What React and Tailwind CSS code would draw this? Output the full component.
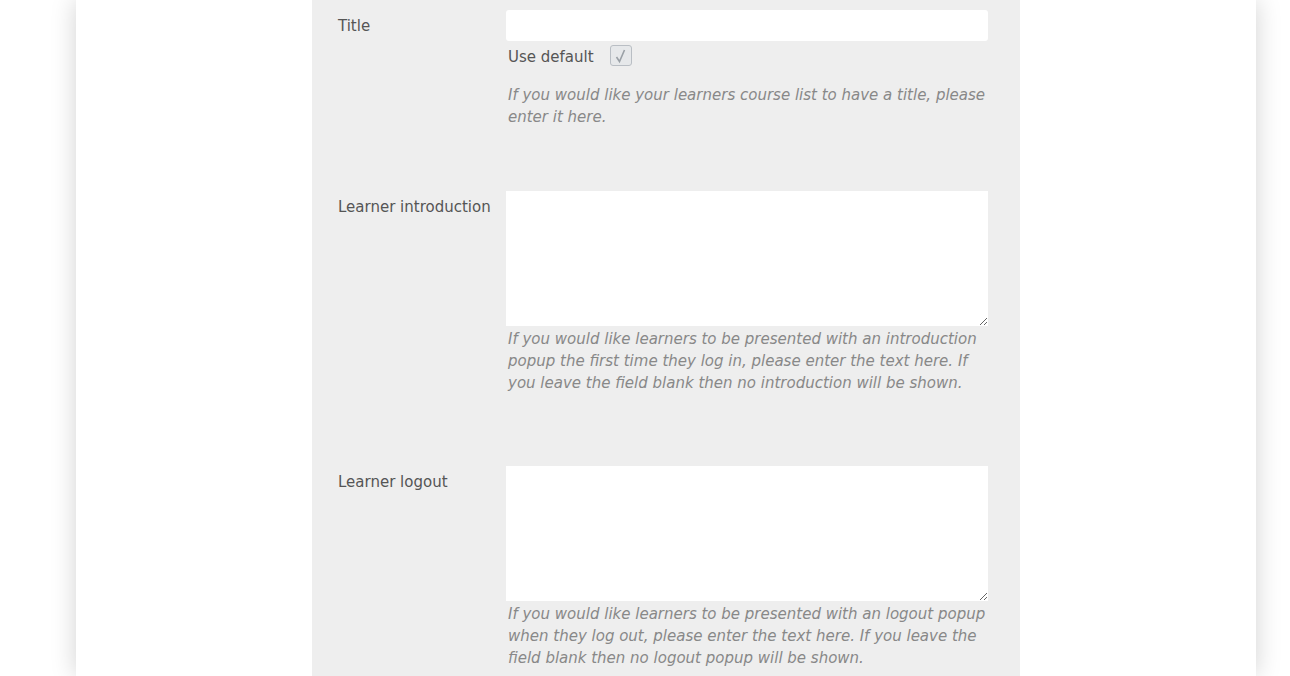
export default function App() {
  const rows = [
    {
      label: 'Learner introduction',
      help: 'If you would like learners to be presented with an introduction popup the first time they log in, please enter the text here. If you leave the field blank then no introduction will be shown.',
    },
    {
      label: 'Learner logout',
      help: 'If you would like learners to be presented with an logout popup when they log out, please enter the text here. If you leave the field blank then no logout popup will be shown.',
    },
  ];

  return (
    <div className="h-[676px] overflow-hidden bg-white font-['DejaVu_Sans',Verdana,sans-serif] text-[15px] text-[#555]">
      <div className="ml-[76px] w-[1180px] h-full bg-white shadow-[0_0_24px_rgba(0,0,0,0.18)]">
        <div className="ml-[236px] w-[708px] h-full bg-[#eeeeee]">
          {/* Title */}
          <div className="flex pt-[10px] pb-[63px]">
            <div className="w-[194px] pl-[26px] pt-[6px] leading-[20px]">Title</div>
            <div className="w-[482px]">
              <input type="text" className="block w-full h-[31px] rounded-[3px] bg-white outline-none" />
              <div className="flex items-start mt-[4px] h-[21px]">
                <span className="pl-[2px] pt-[2px] leading-[20px]">Use default</span>
                <span className="ml-[16px] w-[22px] h-[21px] rounded-[3px] border border-[#b9bec4] bg-[#e6e8ea] flex items-center justify-center">
                  <svg width="16" height="16" viewBox="0 0 16 16" fill="none">
                    <path d="M3.5 9 L6.5 13.5 L11.5 2" stroke="#9aa0a6" strokeWidth="1.6" />
                  </svg>
                </span>
              </div>
              <p className="mt-[18px] pl-[2px] italic text-[#888] leading-[22px]">
                If you would like your learners course list to have a title, please enter it here.
              </p>
            </div>
          </div>

          {rows.map((r) => (
            <div key={r.label} className="flex pb-[72px]">
              <div className="w-[194px] pl-[26px] pt-[6px] leading-[20px]">{r.label}</div>
              <div className="w-[482px]">
                <textarea className="block w-full h-[135px] bg-white outline-none resize-y" />
                <p className="mt-[2px] pl-[2px] italic text-[#888] leading-[22px]">{r.help}</p>
              </div>
            </div>
          ))}
        </div>
      </div>
    </div>
  );
}
